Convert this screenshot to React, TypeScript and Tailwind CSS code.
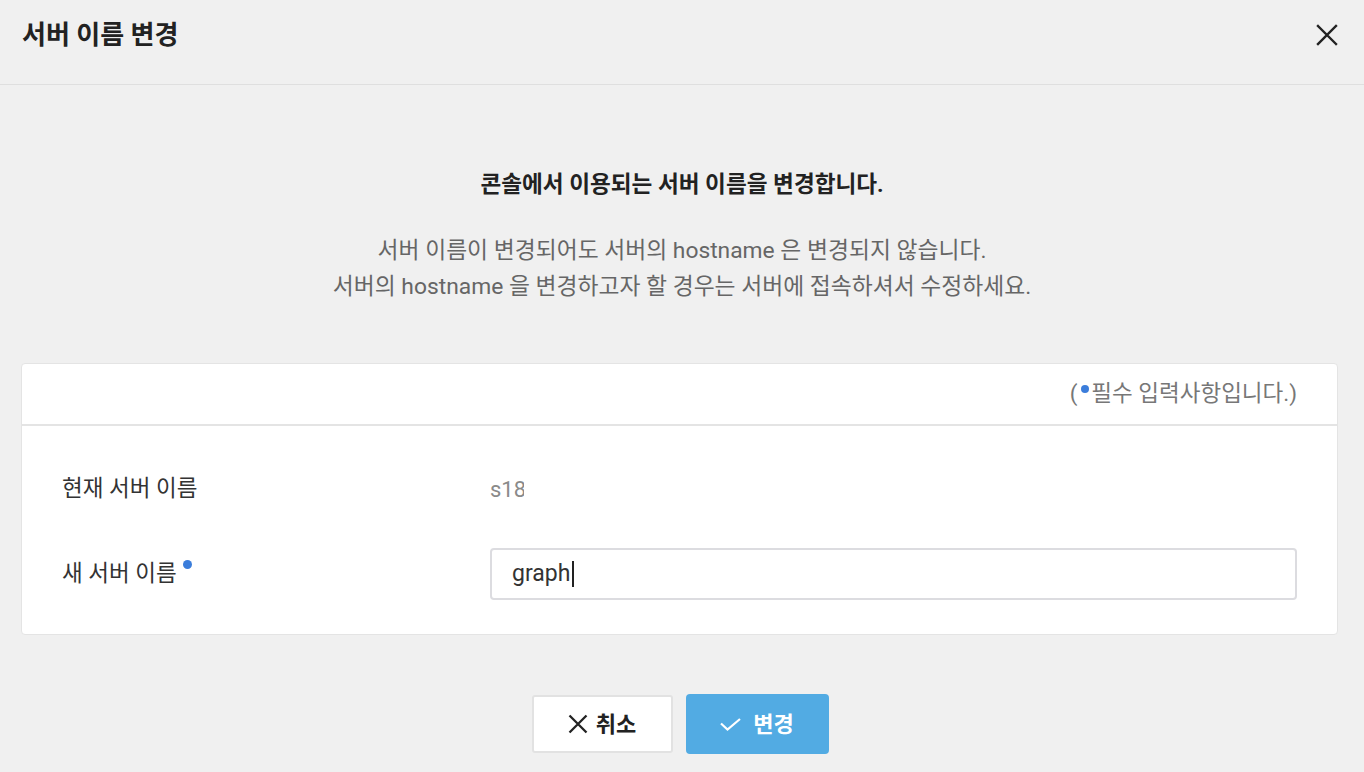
import React from "react";

export default function App() {
  const font = { fontFamily: 'Roboto, "Noto Sans CJK KR", sans-serif' };
  return (
    <div className="w-[1364px] h-[772px] bg-[#f0f0f0] overflow-hidden flex flex-col" style={font}>
      <div className="h-[85px] shrink-0 border-b border-[#dfdfdf] flex items-center justify-between pl-[22px] pr-[26px]">
        <div className="text-[26px] font-bold text-[#222] mt-[-14px]">서버 이름 변경</div>
        <svg width="22" height="22" viewBox="0 0 22 22" className="mt-[-14px]">
          <path d="M2 2 L20 20 M20 2 L2 20" stroke="#222" strokeWidth="2.4" strokeLinecap="square" />
        </svg>
      </div>
      <div className="flex flex-col items-center pt-[85px]">
        <div className="text-[22.6px] font-bold text-[#222] leading-[30px]">콘솔에서 이용되는 서버 이름을 변경합니다.</div>
        <div className="mt-[33px] text-[22.8px] text-[#666] leading-[36px] text-center">
          <div>서버 이름이 변경되어도 서버의 hostname 은 변경되지 않습니다.</div>
          <div>서버의 hostname 을 변경하고자 할 경우는 서버에 접속하셔서 수정하세요.</div>
        </div>
      </div>
      <div className="ml-[21px] mr-[26px] mt-[58px] bg-white border border-[#e4e4e4] rounded-[4px]">
        <div className="h-[62px] border-b-2 border-[#e4e4e4] flex items-center justify-end pr-[40px] text-[22.5px] text-[#777]">
          <span>(</span>
          <span className="w-[8px] h-[8px] rounded-full bg-[#3b7ddb] ml-[4px] mr-[2px] mb-[10px]"></span>
          <span>필수 입력사항입니다.)</span>
        </div>
        <div className="pl-[40px] pr-[40px] pt-[38px] pb-[34px] flex flex-col">
          <div className="flex items-center h-[50px]">
            <div className="w-[428px] text-[22.5px] text-[#333]">현재 서버 이름</div>
            <div className="w-[34px] overflow-hidden whitespace-nowrap text-[22px] text-[#8a8a8a]">s18</div>
          </div>
          <div className="flex items-center mt-[34px]">
            <div className="w-[428px] text-[22.5px] text-[#333] flex items-start">
              <span>새 서버 이름</span>
              <span className="w-[9px] h-[9px] rounded-full bg-[#3b7ddb] ml-[6px] mt-[3px]"></span>
            </div>
            <div className="flex-1 h-[52px] border-2 border-[#dcdce0] rounded-[4px] flex items-center pl-[20px] text-[23px] text-[#333]">
              graph<span className="w-[1.5px] h-[26px] bg-[#222] ml-[2px]"></span>
            </div>
          </div>
        </div>
      </div>
      <div className="flex justify-center gap-[13px] mt-[60px] pr-[4px]">
        <button className="w-[141px] h-[58px] bg-white border-2 border-[#e2e2e2] rounded-[3px] flex items-center justify-center gap-[8px] text-[22px] font-bold text-[#222]" style={font}>
          <svg width="20" height="20" viewBox="0 0 20 20">
            <path d="M1.5 1.5 L18.5 18.5 M18.5 1.5 L1.5 18.5" stroke="#222" strokeWidth="2.3" />
          </svg>
          취소
        </button>
        <button className="w-[143px] h-[60px] mt-[-1px] bg-[#52abe3] rounded-[4px] flex items-center justify-center gap-[12px] text-[22px] font-bold text-white" style={font}>
          <svg width="21" height="13" viewBox="0 0 21 13">
            <path d="M1 5.5 L7.5 11.5 L20 1" stroke="white" strokeWidth="2.2" fill="none" />
          </svg>
          변경
        </button>
      </div>
    </div>
  );
}
